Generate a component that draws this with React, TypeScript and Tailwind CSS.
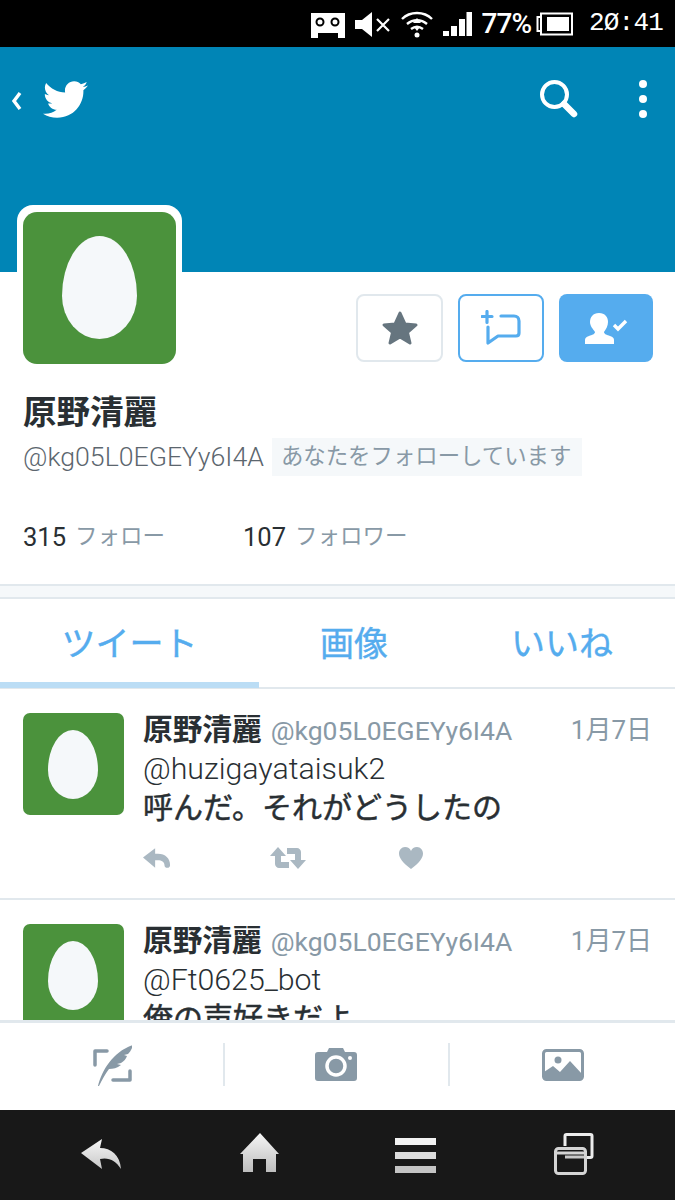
import React from 'react';
import { FaTwitter } from 'react-icons/fa';

function StatusBar() {
    return (
        <div className="h-[47px] shrink-0 bg-black flex items-center justify-end pr-[12px] text-white">
            {/* tape / voicemail */}
            <svg width="34" height="28" viewBox="0 0 34 28" className="mr-[10px]">
                <path d="M0 3h34v25h-7v-5H7v5H0z" fill="#fff" />
                <circle cx="9" cy="12" r="3.5" fill="none" stroke="#000" strokeWidth="2" />
                <circle cx="24" cy="12" r="3.5" fill="none" stroke="#000" strokeWidth="2" />
            </svg>
            {/* muted speaker */}
            <svg width="36" height="28" viewBox="0 0 36 28" className="mr-[10px]">
                <path d="M0 10h7l10-8v25l-10-8H0z" fill="#fff" />
                <path d="M22 9l12 12M34 9L22 21" stroke="#fff" strokeWidth="2.2" />
            </svg>
            {/* wifi */}
            <svg width="32" height="28" viewBox="0 0 32 28" className="mr-[10px]" fill="none" stroke="#fff" strokeWidth="2.4">
                <path d="M1 9C9 1 23 1 31 9" />
                <path d="M6 14c6-5 14-5 20 0" />
                <path d="M10 19c4-3 8-3 12 0" />
                <path d="M16 8l4 5h-8z" fill="#fff" stroke="none" />
                <path d="M16 21l-3-4h6z" fill="#fff" stroke="none" />
                <circle cx="16" cy="25" r="2.5" fill="#fff" stroke="none" />
            </svg>
            {/* signal */}
            <svg width="29" height="26" viewBox="0 0 29 26" className="mr-[10px]" fill="#fff">
                <rect x="0" y="20" width="6" height="5" />
                <rect x="8" y="15" width="6" height="10" />
                <rect x="16" y="8" width="6" height="17" />
                <rect x="23.5" y="1" width="5.5" height="24" />
            </svg>
            <span className="text-[28px] font-medium tracking-[-1px] mr-[5px] font-['Roboto',sans-serif]">77%</span>
            {/* battery */}
            <svg width="37" height="24" viewBox="0 0 37 24" className="mr-[16px]">
                <path d="M5 5H1.500v14H5M5 1.500h31v21H5z" fill="none" stroke="#fff" strokeWidth="2" />
                <rect x="11" y="5" width="22" height="14" fill="#fff" />
            </svg>
            <span className="text-[26px] w-[74px] tracking-[-0.8px] font-['Liberation_Mono',monospace]">2Ø:41</span>
        </div>
    );
}

function CoverHeader() {
    return (
        <div className="h-[225px] shrink-0 bg-[#0085b6] flex items-start justify-between pl-[11px] pr-[28px] pt-[30px]">
            <div className="flex items-center">
                <svg width="11" height="20" viewBox="0 0 11 20" className="mr-[21px] mt-[3px]" fill="none" stroke="#fff" strokeWidth="3.4">
                    <path d="M9 2L3 10l6 8" />
                </svg>
                <FaTwitter size={45} color="#fff" />
            </div>
            <div className="flex items-center mt-[2px]">
                <svg width="39" height="39" viewBox="0 0 39 39" className="mr-[61px]" fill="none" stroke="#fff">
                    <circle cx="15.500" cy="15.500" r="12.500" strokeWidth="4" />
                    <path d="M25 25l10 10" strokeWidth="6.500" strokeLinecap="round" />
                </svg>
                <div className="flex flex-col gap-[7px] mt-[1px]">
                    <div className="w-[8px] h-[8px] rounded-full bg-white" />
                    <div className="w-[8px] h-[8px] rounded-full bg-white" />
                    <div className="w-[8px] h-[8px] rounded-full bg-white" />
                </div>
            </div>
        </div>
    );
}

function ProfileButtons() {
    return (
        <div className="flex items-center mt-[22px] -mr-[1px]">
            <div className="w-[87px] h-[68px] rounded-[8px] border-2 border-[#e1e8ed] bg-white flex items-center justify-center">
                <svg width="38" height="36" viewBox="0 0 38 36">
                    <path d="M19 3l5 11 11 1-8.500 7.500L29 33l-10-6-10 6 2.500-10.500L3 15l11-1z" fill="#66757f" stroke="#66757f" strokeWidth="3" strokeLinejoin="round" />
                </svg>
            </div>
            <div className="ml-[15px] w-[86px] h-[68px] rounded-[8px] border-2 border-[#55acee] bg-white flex items-center justify-center">
                <svg width="40" height="36" viewBox="0 0 40 36" fill="none" stroke="#55acee" strokeWidth="3.200" strokeLinecap="round" strokeLinejoin="round">
                    <path d="M6 1.500v11M1 6.500h10" />
                    <path d="M20 6h13c3 0 5 2 5 5v12c0 2-1 3-3 3H17L7 33V17" />
                </svg>
            </div>
            <div className="ml-[15px] w-[94px] h-[68px] rounded-[8px] bg-[#55acee] flex items-center justify-center">
                <svg width="44" height="32" viewBox="0 0 44 32" fill="#fff">
                    <path d="M15 1c6 0 9 4 9 9 0 4-2 7-4 10 0 2 3 3 6 4 3 1 4 2 4 4v4H1v-4c0-2 1-3 4-4 3-1 6-2 6-4-2-3-5-6-5-10 0-5 3-9 9-9z" />
                    <path d="M30 13l4 4 8-8" fill="none" stroke="#fff" strokeWidth="3.400" />
                </svg>
            </div>
        </div>
    );
}

function ProfileInfo() {
    return (
        <div className="h-[314px] shrink-0 bg-white px-[23px] border-b-2 border-[#e1e8ed]">
            <div className="flex items-start justify-between">
                <div className="-mt-[67px] -ml-[6px] w-[165px] h-[165px] shrink-0 rounded-[16px] bg-white px-[6px] pt-[7px]">
                    <div className="w-[153px] h-[152px] rounded-[14px] bg-[#4b923c] flex items-center justify-center">
                        <div className="w-[75px] h-[103px] mb-[2px] bg-[#f5f8fa] rounded-[50%_50%_50%_50%/58%_58%_42%_42%]" />
                    </div>
                </div>
                <ProfileButtons />
            </div>
            <div className="mt-[23px] text-[33.500px] leading-[40px] font-bold text-[#292f33]">原野清麗</div>
            <div className="flex items-center mt-[5px] h-[38px]">
                <span className="text-[26.700px] font-light text-[#5c666e] font-['Roboto',sans-serif]">@kg05L0EGEYy6I4A</span>
                <span className="ml-[8px] h-[38px] pl-[9px] pr-[11px] flex items-center text-[22.400px] whitespace-nowrap bg-[#f5f8fa] text-[#8899a6]">あなたをフォローしています</span>
            </div>
            <div className="flex items-center mt-[42px] h-[38px]">
                <span className="text-[25.500px] text-[#292f33] w-[52px]">315</span>
                <span className="text-[22.500px] text-[#8899a6] w-[168px]">フォロー</span>
                <span className="text-[25.500px] text-[#292f33] w-[52px]">107</span>
                <span className="text-[22.500px] text-[#8899a6]">フォロワー</span>
            </div>
        </div>
    );
}

function Tabs() {
    return (
        <div className="h-[90px] shrink-0 bg-white flex border-b-2 border-[#e1e8ed] text-[34px] text-[#55acee] [-webkit-text-stroke:0.4px_#55acee]">
            <div className="w-[259px] relative flex items-center justify-center">
                <span className="mt-[2px]">ツイート</span>
                <div className="absolute left-0 right-0 -bottom-[1px] h-[6px] bg-[#bbddf5]" />
            </div>
            <div className="w-[190px] flex items-center justify-center">
                <span className="mt-[2px]">画像</span>
            </div>
            <div className="flex-1 flex items-center justify-center">
                <span className="mt-[2px]">いいね</span>
            </div>
        </div>
    );
}

function Tweet({ mention, text }: { mention: string; text: string }) {
    return (
        <div className="h-[211px] shrink-0 bg-white border-b-2 border-[#e1e8ed] flex pl-[23px] pr-[24px] pt-[24px]">
            <div className="w-[101px] h-[102px] shrink-0 rounded-[7px] bg-[#4b923c] flex items-center justify-center">
                <div className="w-[50px] h-[69px] mr-[2px] bg-[#f5f8fa] rounded-[50%_50%_50%_50%/58%_58%_42%_42%]" />
            </div>
            <div className="ml-[19px] flex-1 min-w-0 -mt-[1px]">
                <div className="flex items-center justify-between h-[36px]">
                    <div className="flex items-center">
                        <span className="text-[29.700px] font-bold text-[#292f33]">原野清麗</span>
                        <span className="ml-[9px] text-[26.500px] text-[#8899a6] mt-[1px]">@kg05L0EGEYy6I4A</span>
                    </div>
                    <span className="text-[26px] text-[#8899a6] -mr-[1px]">1月7日</span>
                </div>
                <div className="text-[30.300px] leading-[38px] mt-[2px] font-light text-[#292f33] font-['Roboto',sans-serif]">{mention}</div>
                <div className="text-[30px] leading-[40px] text-[#292f33] [-webkit-text-stroke:0.5px_#292f33]">{text}</div>
                <div className="flex items-center mt-[18px] h-[24px]">
                    <svg width="28" height="21" viewBox="0 0 30 22" fill="#aab8c2">
                        <path d="M0 10L13 0v6h3c8 0 13 5 13 12 0 2-1 3-3 3s-3-1-3-3c0-3-3-5-7-5h-3v8z" />
                    </svg>
                    <svg width="36" height="22" viewBox="0 0 36 22" fill="#aab8c2" className="ml-[99px]">
                        <path d="M8 0l8 9h-5v6h8v6H9c-2 0-4-2-4-4V9H0zM28 22l-8-9h5V7h-8V1h10c2 0 4 2 4 4v8h5z" />
                    </svg>
                    <svg width="24" height="22" viewBox="0 0 24 22" fill="#aab8c2" className="ml-[93px]">
                        <path d="M12 22C4 16 0 11 0 6.500 0 3 2.500 0 6 0c3 0 5 1.500 6 4 1-2.500 3-4 6-4 3.500 0 6 3 6 6.500C24 11 20 16 12 22z" />
                    </svg>
                </div>
            </div>
        </div>
    );
}

function ComposeBar() {
    return (
        <div className="h-[90px] shrink-0 bg-white border-t-[3px] border-[#e1e8ed] flex items-start pt-[20px]">
            <div className="w-[223px] h-[43px] flex items-center justify-center">
                <svg width="40" height="42" viewBox="0 0 40 42">
                    <path d="M15 7H3v14" fill="none" stroke="#8899a6" strokeWidth="3.500" strokeLinecap="round" strokeLinejoin="round" />
                    <path d="M38 27v9H21" fill="none" stroke="#8899a6" strokeWidth="3.500" strokeLinecap="round" strokeLinejoin="round" />
                    <path d="M6 42C10 26 21 8 41 1c-1 4-3 7-5 9l-4 1 3 1c-1 3-3 5-6 7l-4 1 4 1c-4 3-8 4-12 4-4 5-7 11-10 17z" fill="#8899a6" />
                </svg>
            </div>
            <div className="w-[2px] h-[43px] bg-[#e1e8ed]" />
            <div className="w-[223px] h-[43px] flex items-center justify-center">
                <svg width="42" height="33" viewBox="0 0 42 33" className="-ml-[1px]">
                    <path d="M3 4h9l2-4h14l2 4h9c2 0 3 1 3 3v23c0 2-1 3-3 3H3c-2 0-3-1-3-3V7c0-2 1-3 3-3z" fill="#8899a6" />
                    <circle cx="21" cy="18" r="9" fill="none" stroke="#fff" strokeWidth="3.500" />
                    <circle cx="35" cy="10" r="2" fill="#fff" />
                </svg>
            </div>
            <div className="w-[2px] h-[43px] bg-[#e1e8ed]" />
            <div className="flex-1 h-[43px] flex items-center justify-center">
                <svg width="42" height="32" viewBox="0 0 42 32">
                    <rect x="1.500" y="1.500" width="39" height="29" rx="3" fill="#fff" stroke="#8899a6" strokeWidth="3" />
                    <circle cx="16" cy="11" r="3.500" fill="#8899a6" />
                    <path d="M2 30v-7l9-6 7 6 10-11 12 13v5z" fill="#8899a6" />
                </svg>
            </div>
        </div>
    );
}

function NavBar() {
    return (
        <div className="h-[90px] shrink-0 bg-[#181818] flex items-start">
            <div className="w-[179px] flex justify-center pl-[22px] pt-[29px]">
                <svg width="40" height="30" viewBox="0 0 40 30">
                    <defs>
                        <linearGradient id="backGrad" x1="0" y1="0" x2="0" y2="1">
                            <stop offset="0" stopColor="#f6f6f6" />
                            <stop offset="1" stopColor="#c8c8c8" />
                        </linearGradient>
                    </defs>
                    <path d="M21 0l-2 9c11 0 20 7 21 21-5-8-12-12-21-10l2 10L0 14z" fill="url(#backGrad)" />
                </svg>
            </div>
            <div className="w-[160px] flex justify-center pt-[23px] pl-[1px]">
                <svg width="40" height="39" viewBox="0 0 40 39">
                    <defs>
                        <linearGradient id="homeGrad" x1="0" y1="0" x2="0" y2="1">
                            <stop offset="0" stopColor="#f6f6f6" />
                            <stop offset="1" stopColor="#bdbdbd" />
                        </linearGradient>
                    </defs>
                    <path d="M20 0l19 21h-3v18H26V26H13v13H3V21H0z" fill="url(#homeGrad)" />
                </svg>
            </div>
            <div className="w-[153px] flex flex-col items-center gap-[7px] pt-[28px]">
                <div className="w-[41px] h-[7px] bg-[#f2f2f2]" />
                <div className="w-[41px] h-[7px] bg-[#dcdcdc]" />
                <div className="w-[41px] h-[7px] bg-[#c4c4c4]" />
            </div>
            <div className="flex-1 flex justify-center pr-[19px] pt-[23px]">
                <svg width="40" height="42" viewBox="0 0 40 42" fill="none">
                    <path d="M11 13V3c0-1 .5-1.500 1.500-1.500h24c1 0 1.500.5 1.500 1.500v20c0 1-.5 1.500-1.500 1.500H33" stroke="#ececec" strokeWidth="3" />
                    <path d="M11 24h19" stroke="#c8c8c8" strokeWidth="3" />
                    <rect x="1.500" y="15.500" width="30" height="25" rx="3" stroke="#d4d4d4" strokeWidth="3" />
                    <path d="M3 20h27" stroke="#d4d4d4" strokeWidth="3" />
                </svg>
            </div>
        </div>
    );
}

export default function App() {
    return (
        <div className="w-[675px] h-[1200px] flex flex-col overflow-hidden bg-white font-['Roboto','Noto_Sans_CJK_JP',sans-serif]">
            <StatusBar />
            <CoverHeader />
            <ProfileInfo />
            <div className="h-[13px] shrink-0 bg-[#f5f8fa] border-b-2 border-[#e1e8ed]" />
            <div className="flex-1 min-h-0 overflow-hidden flex flex-col">
                <Tabs />
                <Tweet mention="@huzigayataisuk2" text="呼んだ。それがどうしたの" />
                <Tweet mention="@Ft0625_bot" text="俺の声好きだよ" />
            </div>
            <ComposeBar />
            <NavBar />
        </div>
    );
}
